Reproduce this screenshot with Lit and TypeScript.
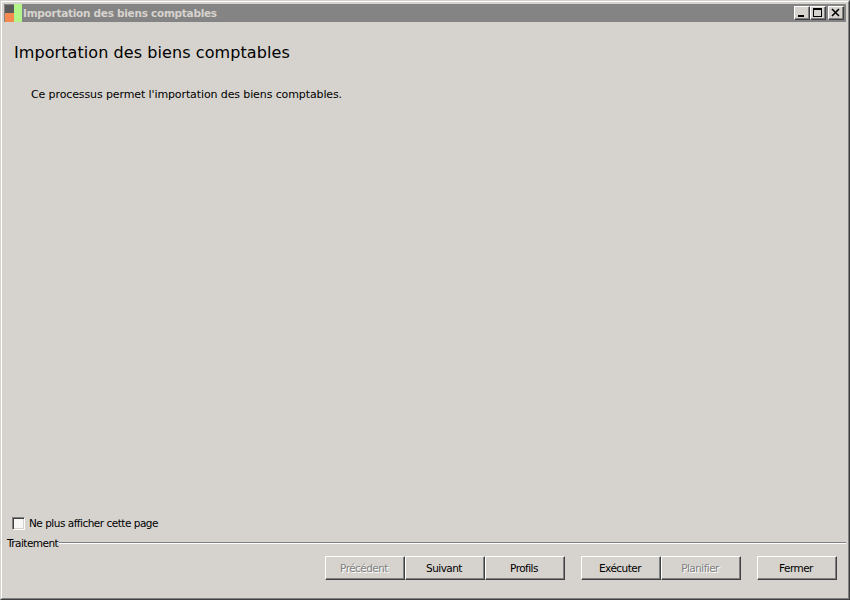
import { LitElement, html, css } from "lit";
import { customElement } from "lit/decorators.js";

@customElement("app-root")
export class AppRoot extends LitElement {
  static styles = css`
    :host { display: block; width: 850px; height: 600px; font-family: "DejaVu Sans", sans-serif; color: #000; }
    * { box-sizing: border-box; }
    .window { width: 850px; height: 600px; background: #d6d3ce; display: flex; flex-direction: column;
      border: 1px solid; border-color: #d6d3ce #404040 #404040 #d6d3ce; padding: 0; }
    .inner { flex: 1; display: flex; flex-direction: column; border: 1px solid; border-color: #fff #808080 #808080 #fff; padding: 2px 2px 0 2px; min-height: 0; }
    .titlebar { height: 18px; background: #848484; display: flex; align-items: center; flex: none; }
    .appicon { width: 18px; height: 18px; flex: none; display: block; }
    .titletext { color: #d6d3ce; font-size: 10.5px; font-weight: 700; margin-left: 1px; white-space: nowrap; letter-spacing: -0.27px; flex: 1; }
    .ctrls { display: flex; margin-right: 2px; }
    .ctrl { width: 16px; height: 14px; background: #d6d3ce; border: 1px solid; border-color: #fff #404040 #404040 #fff; box-shadow: inset -1px -1px 0 #808080; display: block; padding: 0; }
    .ctrl svg { display: block; }
    .ctrl.close { margin-left: 2px; }
    .main { flex: 1; display: flex; flex-direction: column; min-height: 0; padding: 0 0 0 8px; }
    h1 { margin: 21px 0 0 2px; font-size: 16px; font-weight: 400; line-height: 20px; letter-spacing: 0.08px; white-space: nowrap; }
    .desc { margin: 25px 0 0 19px; font-size: 11px; line-height: 14px; letter-spacing: -0.11px; white-space: nowrap; flex: 1; }
    .check { display: flex; align-items: center; height: 14px; }
    .box { width: 13px; height: 13px; background: #f8f8f6; border: 1px solid; border-color: #808080 #fff #fff #808080; box-shadow: inset 1px 1px 0 #404040, inset -1px -1px 0 #d6d3ce; flex: none; }
    .check span { margin-left: 4px; font-size: 10.5px; letter-spacing: -0.5px; white-space: nowrap; }
    .group { display: flex; align-items: center; height: 14px; margin: 6px 0 0 -5px; }
    .group span { font-size: 10.5px; letter-spacing: -0.55px; }
    .group i { flex: 1; height: 2px; border-top: 1px solid #808080; border-bottom: 1px solid #fff; margin-left: 1px; }
    .actions { display: flex; justify-content: flex-end; margin: 6px 9px 18px 0; }
    button.btn { width: 80px; height: 24px; background: #d6d3ce; border: 1px solid; border-color: #fff #404040 #404040 #fff; box-shadow: inset -1px -1px 0 #808080; font: inherit; font-size: 10.5px; letter-spacing: -0.55px; color: #000; padding: 0 2px 0 0; }
    button.btn:disabled { color: #808080; text-shadow: 1px 1px 0 #fff; }
    button.btn.gap1 { margin-left: 16px; }
  `;
  render() {
    return html`<div class="window"><div class="inner">
      <div class="titlebar">
        <svg class="appicon" viewBox="0 0 18 18" aria-hidden="true">
          <rect x="1" y="1" width="9" height="17" fill="#5a5a5a"/>
          <rect x="1" y="9" width="9" height="9" fill="#f58a50"/>
          <rect x="10" y="0" width="8" height="18" fill="#b4f58a"/>
        </svg>
        <div class="titletext">Importation des biens comptables</div>
        <div class="ctrls">
          <button class="ctrl"><svg width="14" height="12" viewBox="0 0 14 12"><rect x="3" y="8" width="6" height="2" fill="#000"/></svg></button>
          <button class="ctrl"><svg width="14" height="12" viewBox="0 0 14 12"><path d="M2 1h9v9H2z M3 3v6h7V3z" fill="#000" fill-rule="evenodd"/></svg></button>
          <button class="ctrl close"><svg width="14" height="12" viewBox="0 0 14 12"><path d="M3 2l7 7M10 2l-7 7" stroke="#000" stroke-width="1.6" fill="none"/></svg></button>
        </div>
      </div>
      <div class="main">
        <h1>Importation des biens comptables</h1>
        <div class="desc">Ce processus permet l'importation des biens comptables.</div>
        <div class="check"><div class="box"></div><span>Ne plus afficher cette page</span></div>
        <div class="group"><span>Traitement</span><i></i></div>
        <div class="actions">
          <button class="btn" disabled>Précédent</button>
          <button class="btn">Suivant</button>
          <button class="btn">Profils</button>
          <button class="btn gap1">Exécuter</button>
          <button class="btn" disabled>Planifier</button>
          <button class="btn gap1">Fermer</button>
        </div>
      </div>
    </div></div>`;
  }
}
